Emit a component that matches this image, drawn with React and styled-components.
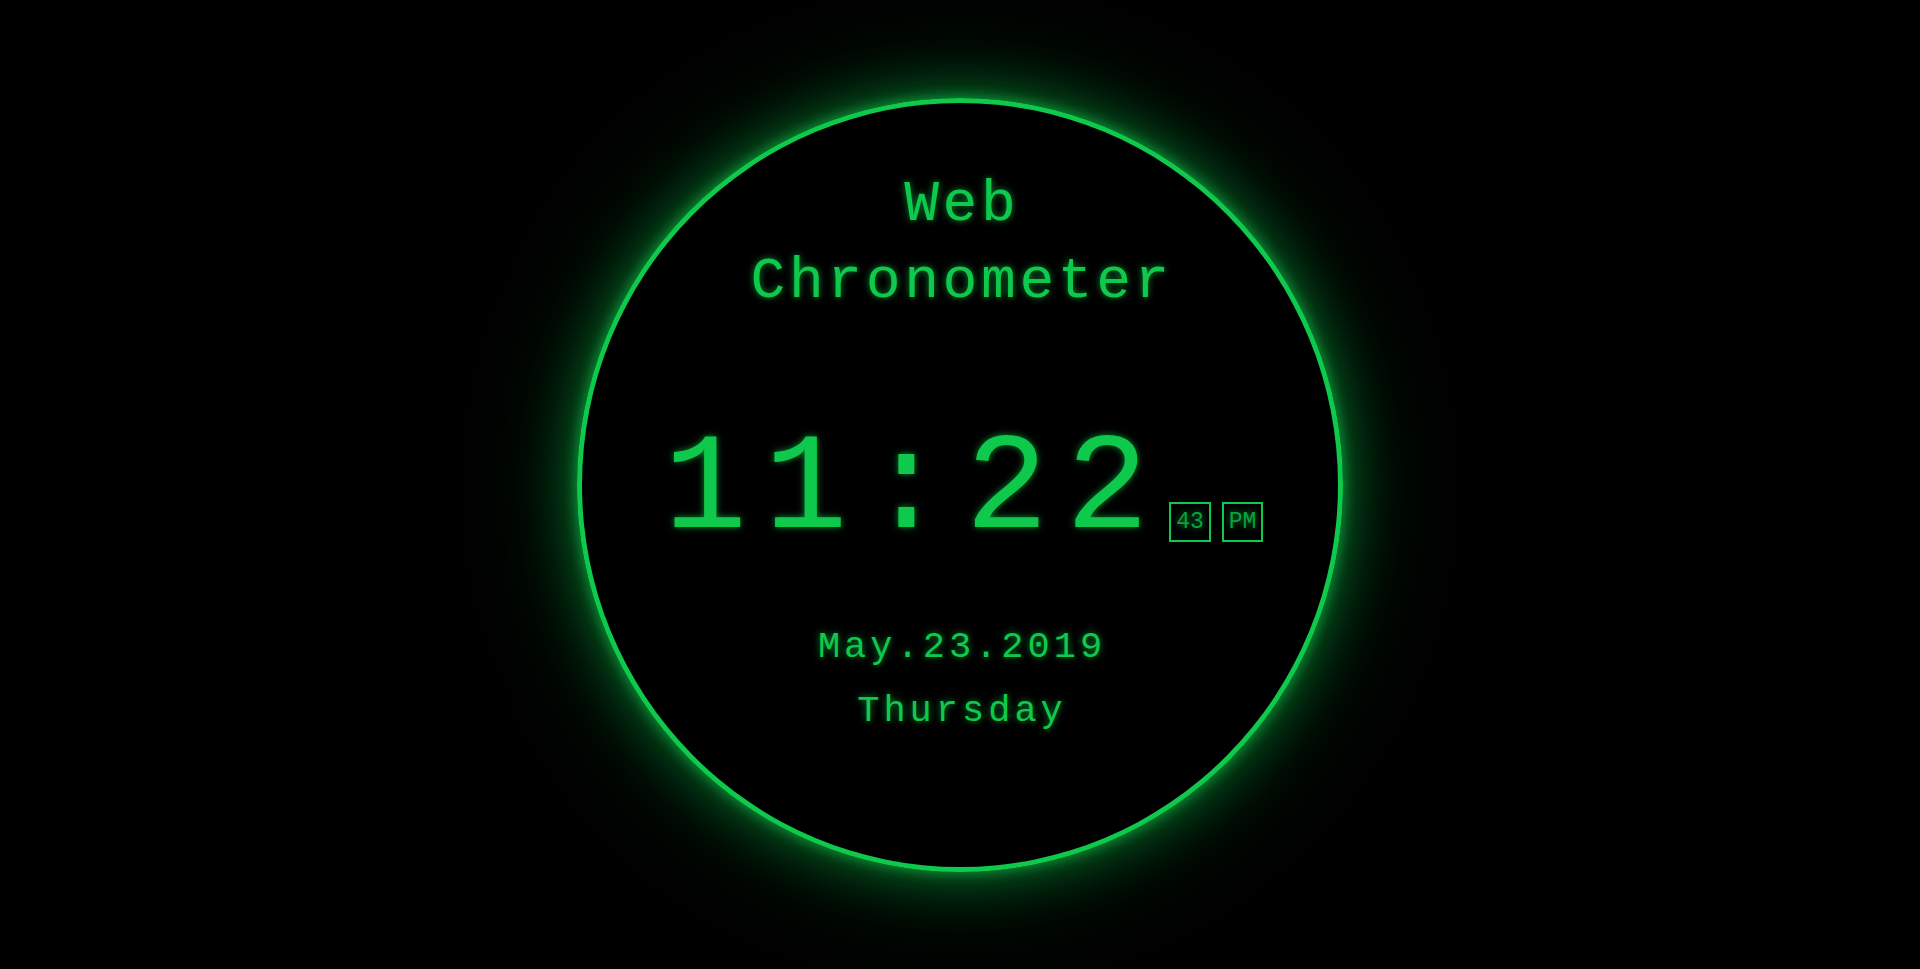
import React from 'react'
import styled, { createGlobalStyle } from 'styled-components'

const GlobalStyle = createGlobalStyle`
    html, body {
        margin: 0;
        padding: 0;
        background: #000;
    }
    body {
        font-family: "Liberation Mono", "Courier New", monospace;
        color: #0fc94c;
    }
`

const Page = styled.div`
    min-height: 100vh;
    display: flex;
    align-items: center;
    justify-content: center;
    background: #000;
`

const Dial = styled.div`
    width: 756px;
    height: 764px;
    border: 5px solid #0fc94c;
    border-radius: 50%;
    box-sizing: content-box;
    display: flex;
    flex-direction: column;
    align-items: center;
    box-shadow:
        0 0 14px rgba(15, 201, 76, 0.7),
        0 0 55px rgba(15, 201, 76, 0.5),
        0 0 120px rgba(15, 201, 76, 0.3);
    text-shadow: 0 0 7px rgba(15, 201, 76, 0.7);
`

const Title = styled.h1`
    margin: 63px 0 0;
    padding-left: 3.6px;
    font-size: 58px;
    line-height: 77px;
    letter-spacing: 3.6px;
    font-weight: normal;
    text-align: center;
`

const TimeRow = styled.div`
    margin-top: 101px;
    padding-left: 7.5px;
    display: flex;
    align-items: flex-end;
`

const Digits = styled.span`
    font-size: 138px;
    line-height: 1;
    letter-spacing: 17.6px;
`

const Tag = styled.span`
    margin: 0 0 17px 3px;
    border: 2px solid #0fc94c;
    padding: 5px 5px;
    font-size: 23px;
    color: #0ba23f;

    & + & {
        margin-left: 11px;
    }
`

const Line = styled.div`
    padding-left: 4px;
    font-size: 37px;
    line-height: 64px;
    letter-spacing: 4px;
    text-align: center;
    margin-top: ${(p) => p.$top || 0}px;
`

const App = () => {
    return (
        <>
            <GlobalStyle />
            <Page>
                <Dial>
                    <Title>Web<br />Chronometer</Title>
                    <TimeRow>
                        <Digits>11:22</Digits>
                        <Tag>43</Tag>
                        <Tag>PM</Tag>
                    </TimeRow>
                    <Line $top={56}>May.23.2019</Line>
                    <Line>Thursday</Line>
                </Dial>
            </Page>
        </>
    )
}

export default App
